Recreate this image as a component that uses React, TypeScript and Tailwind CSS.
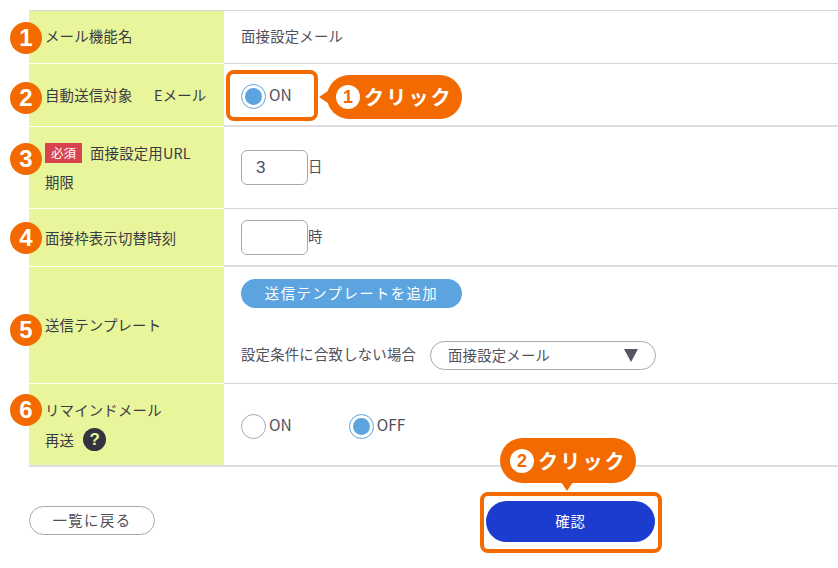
function Badge({ n, cls }: { n: string; cls: string }) {
  return (
    <div className={`absolute left-[10px] w-[32px] h-[32px] rounded-full bg-[#f26a00] text-white flex items-center justify-center text-[24px] font-bold leading-none font-['Liberation_Sans',sans-serif] ${cls}`}>
      {n}
    </div>
  );
}

function Radio({ on, label }: { on: boolean; label: string }) {
  return (
    <div className="flex items-center gap-[3px]">
      <span className={`w-[25px] h-[25px] rounded-full bg-white flex items-center justify-center border ${on ? "border-[#5ba4e0]" : "border-[#a9a9b2]"}`}>
        {on && <span className="w-[17px] h-[17px] rounded-full bg-[#5ba4e0]" />}
      </span>
      <span className="text-[15.5px] tracking-normal leading-none text-[#50505c] relative top-[-2px]">{label}</span>
    </div>
  );
}

function Row({ h, left, children, thick, last }: { h: string; left: React.ReactNode; children: React.ReactNode; thick?: boolean; last?: boolean }) {
  return (
    <div className={`flex ${h}`}>
      <div className={`w-[195px] bg-[#e8f59a] pl-[16px] flex flex-col justify-center text-[14.4px] tracking-[0.2px] text-[#3a3a44] ${last ? "border-b-2 border-[#dedee2]" : "border-b border-white"}`}>
        {left}
      </div>
      <div className={`flex-1 pl-[17px] text-[14.4px] tracking-[0.2px] text-[#50505c] flex flex-col justify-center ${thick ? "border-b-2 border-[#dedee2]" : "border-b border-[#d5d5da]"}`}>
        {children}
      </div>
    </div>
  );
}

export default function App() {
  return (
    <div className="relative w-[838px] h-[568px] bg-white overflow-hidden pt-[10px] font-['Noto_Sans_CJK_JP','Noto_Sans',sans-serif]">
      <div className="ml-[29px] border-t border-[#d5d5da]">
        <Row h="h-[53px]" left={<span className="relative top-[-1px]">メール機能名</span>}>
          <span className="relative top-[-1px]">面接設定メール</span>
        </Row>
        <Row h="h-[63px]" thick left={<span className="whitespace-pre">自動送信対象　  Eメール</span>}>
          <div className="relative top-[2px]">
            <Radio on label="ON" />
          </div>
        </Row>
        <Row
          h="h-[82px]"
          left={
            <div className="flex flex-col gap-[9px]">
              <div className="flex items-center leading-[20px]">
                <span className="w-[37px] h-[20px] bg-[#d9434f] text-white text-[12.5px] tracking-normal flex items-center justify-center leading-none">必須</span>
                <span className="ml-[8px]">面接設定用URL</span>
              </div>
              <div className="leading-[20px]">期限</div>
            </div>
          }
        >
          <div className="flex items-center">
            <div className="w-[67px] h-[35px] rounded-[6px] border border-[#a9a9b2] flex items-center pl-[14px] text-[17px] text-[#50505c] font-['Liberation_Sans',sans-serif]">3</div>
            <span className="relative top-[-2px]">日</span>
          </div>
        </Row>
        <Row h="h-[58px]" thick left={<span>面接枠表示切替時刻</span>}>
          <div className="flex items-center">
            <div className="w-[67px] h-[35px] rounded-[6px] border border-[#a9a9b2]" />
            <span className="relative top-[-1px]">時</span>
          </div>
        </Row>
        <Row h="h-[117px]" left={<span>送信テンプレート</span>}>
          <div className="flex flex-col gap-[33px] relative top-[-1px]">
            <div className="w-[221px] h-[29px] rounded-full bg-[#5ba4e0] text-white text-[14.4px] tracking-[1.4px] flex items-center justify-center leading-none">送信テンプレートを追加</div>
            <div className="flex items-center">
              <span className="w-[189px] relative top-[-1px]">設定条件に合致しない場合</span>
              <div className="w-[226px] h-[29px] rounded-full border border-[#a9a9b2] flex items-center justify-between pl-[17px] pr-[17px] text-[#50505c]">
                <span>面接設定メール</span>
                <span className="w-0 h-0 border-l-[7.5px] border-r-[7.5px] border-t-[13px] border-l-transparent border-r-transparent border-t-[#55555f]" />
              </div>
            </div>
          </div>
        </Row>
        <Row
          h="h-[83px]"
          thick
          last
          left={
            <div className="flex flex-col gap-[8px] relative top-[1px]">
              <div className="leading-[20px]">リマインドメール</div>
              <div className="flex items-center leading-[22px]">
                <span>再送</span>
                <span className="ml-[9px] w-[23px] h-[23px] rounded-full bg-[#33333f] text-[#e8f59a] flex items-center justify-center text-[17px] font-bold leading-none font-['Liberation_Sans',sans-serif]">?</span>
              </div>
            </div>
          }
        >
          <div className="flex items-center gap-[57px] relative top-[2px]">
            <Radio on={false} label="ON" />
            <Radio on label="OFF" />
          </div>
        </Row>
      </div>

      <div className="ml-[29px] mt-[39px] relative flex">
        <div className="w-[126px] h-[29px] rounded-full border border-[#a9a9b2] text-[14.4px] tracking-[1.4px] text-[#50505c] flex items-center justify-center leading-none">一覧に戻る</div>
      </div>

      {/* 確認ボタン */}
      <div className="absolute left-[480px] top-[492px] w-[182px] h-[61px] rounded-[8px] border-[4px] border-[#f26a00] bg-white flex items-start pl-[2px] pt-[5px]">
        <div className="w-[169px] h-[41px] rounded-full bg-[#1c3ccf] text-white text-[14.4px] tracking-[0.8px] flex items-center justify-center leading-none">確認</div>
      </div>

      {/* ON の枠 */}
      <div className="absolute left-[226px] top-[70px] w-[92px] h-[51px] rounded-[8px] border-[4px] border-[#f26a00]" />

      {/* 吹き出し 1 */}
      <div className="absolute left-[327px] top-[75px] w-[135px] h-[44px] rounded-full bg-[#f26a00] flex items-center pl-[9px] gap-[4px] text-white font-bold text-[20px] tracking-[2.2px] leading-none">
        <span className="w-[24px] h-[24px] rounded-full bg-white text-[#f26a00] flex items-center justify-center text-[18px] tracking-normal font-['Liberation_Sans',sans-serif]">1</span>
        <span>クリック</span>
      </div>
      <div className="absolute left-[319px] top-[91px] w-0 h-0 border-t-[6px] border-b-[6px] border-r-[9px] border-t-transparent border-b-transparent border-r-[#f26a00]" />

      {/* 吹き出し 2 */}
      <div className="absolute left-[500px] top-[438px] w-[136px] h-[45px] rounded-full bg-[#f26a00] flex items-center pl-[10px] gap-[4px] text-white font-bold text-[20px] tracking-[2.2px] leading-none">
        <span className="w-[24px] h-[24px] rounded-full bg-white text-[#f26a00] flex items-center justify-center text-[18px] tracking-normal font-['Liberation_Sans',sans-serif]">2</span>
        <span>クリック</span>
      </div>
      <div className="absolute left-[561px] top-[482px] w-0 h-0 border-l-[6px] border-r-[6px] border-t-[9px] border-l-transparent border-r-transparent border-t-[#f26a00]" />

      <Badge n="1" cls="top-[22px]" />
      <Badge n="2" cls="top-[82px]" />
      <Badge n="3" cls="top-[143px]" />
      <Badge n="4" cls="top-[222px]" />
      <Badge n="5" cls="top-[314px]" />
      <Badge n="6" cls="top-[394px]" />
    </div>
  );
}
